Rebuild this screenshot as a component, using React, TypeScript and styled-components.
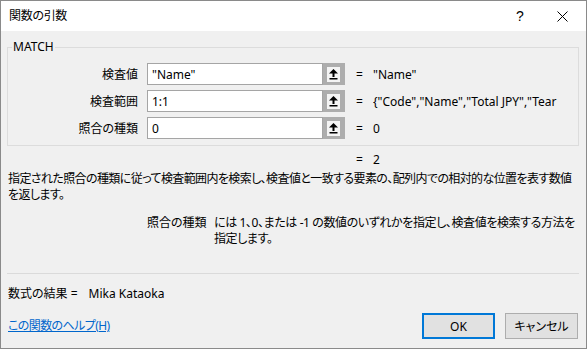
import React from "react";
import styled, { createGlobalStyle } from "styled-components";

const GlobalStyle = createGlobalStyle`
  html, body { margin: 0; padding: 0; background: #ffffff; }
  body {
    font-family: "Noto Sans", "Noto Sans CJK JP", sans-serif;
    font-size: 12px;
    color: #000;
    font-feature-settings: "palt";
  }
  * { box-sizing: border-box; }
`;

const Window = styled.div`
  width: 587px;
  height: 349px;
  border: 1px solid #8a8a8a;
  display: flex;
  flex-direction: column;
  background: #f0f0f0;
  overflow: hidden;
`;

const TitleBar = styled.div`
  height: 30px;
  flex: none;
  background: #ffffff;
  display: flex;
  align-items: center;
  padding-left: 8px;
`;

const Title = styled.div`
  line-height: 16px;
  margin-top: -1px;
  letter-spacing: -0.3px;
`;

const TitleButtons = styled.div`
  margin-left: auto;
  display: flex;
  height: 100%;
`;

const TitleButton = styled.div<{ $w: number }>`
  width: ${(p) => p.$w}px;
  height: 100%;
  display: flex;
  align-items: center;
  justify-content: center;
  font-size: 14px;
  font-family: "Liberation Sans", sans-serif;
`;

const Body = styled.div`
  flex: 1;
  display: flex;
  flex-direction: column;
  padding: 0 7px 0 6px;
`;

const GroupBox = styled.fieldset`
  margin: 8px 0 0;
  padding: 8px 0 6px 0;
  border: 1px solid #dcdcdc;
  min-width: 0;
`;

const GroupLegend = styled.legend`
  margin-left: 4px;
  padding: 0 1px;
  line-height: 16px;
`;

const Rows = styled.div`
  display: flex;
  flex-direction: column;
  gap: 5px;
`;

const ArgRow = styled.div`
  display: flex;
  align-items: center;
  height: 22px;
`;

const ArgLabel = styled.div`
  width: 130px;
  flex: none;
  text-align: right;
  margin-right: 9px;
`;

const Field = styled.input`
  width: 176px;
  height: 22px;
  flex: none;
  border: 1px solid #a5a5a5;
  background: #fff;
  padding: 0 4px;
  font: inherit;
  font-feature-settings: "palt";
  color: #000;
  outline: none;
`;

const RefButton = styled.div`
  width: 22px;
  height: 22px;
  flex: none;
  background: #adadad;
  display: flex;
  align-items: center;
  padding-left: 4px;
`;

const RefFace = styled.div`
  width: 13px;
  height: 15px;
  background: #f4f4f4;
  display: flex;
  align-items: center;
  justify-content: center;
`;

const Eq = styled.div`
  width: 17px;
  flex: none;
  margin-left: 11px;
`;

const Value = styled.div`
  flex: 1;
  min-width: 0;
  white-space: nowrap;
  overflow: hidden;
`;

const ResultEq = styled.div`
  display: flex;
  margin-top: 6px;
  padding-left: 349px;
  line-height: 16px;
`;

const ResultEqSign = styled.span`
  width: 17px;
  flex: none;
`;

const Description = styled.div`
  margin-top: 3px;
  padding-left: 1px;
  line-height: 16px;
  white-space: nowrap;
  letter-spacing: -0.6px;
`;

const ArgHelp = styled.div`
  display: flex;
  margin-top: 12px;
  padding-left: 140px;
  line-height: 16px;
`;

const ArgHelpLabel = styled.div`
  width: 67px;
  flex: none;
`;

const ArgHelpText = styled.div`
  white-space: nowrap;
  letter-spacing: -0.4px;
`;

const Separator = styled.div`
  margin-top: 26px;
  border-top: 1px solid #dadada;
`;

const FormulaResult = styled.div`
  display: flex;
  margin-top: 12px;
  padding-left: 1px;
  line-height: 16px;
`;

const FormulaValue = styled.span`
  margin-left: 11px;
`;

const Footer = styled.div`
  display: flex;
  align-items: center;
  margin-top: 11px;
  gap: 10px;
  padding-right: 1px;
`;

const HelpLink = styled.a`
  flex: 1;
  color: #0066cc;
  text-decoration: underline;
  padding-left: 1px;
  line-height: 16px;
  letter-spacing: -0.6px;
  cursor: pointer;
`;

const DialogButton = styled.button<{ $primary?: boolean }>`
  width: 73px;
  height: 26px;
  background: #e1e1e1;
  border: ${(p) => (p.$primary ? "2px solid #0078d7" : "1px solid #adadad")};
  font: inherit;
  font-feature-settings: "palt";
  color: #000;
  padding: 0;
`;

const UpArrow = () => (
  <svg width="9" height="11" viewBox="0 0 9 11">
    <polygon points="4.5,0 9,4.5 0,4.5" fill="#000" />
    <rect x="3.5" y="4" width="2" height="4" fill="#000" />
    <rect x="0.5" y="9" width="8" height="1.5" fill="#000" />
  </svg>
);

const CloseIcon = () => (
  <svg width="11" height="11" viewBox="0 0 11 11">
    <path d="M0.5 0.5 L10.5 10.5 M10.5 0.5 L0.5 10.5" stroke="#000" strokeWidth="1" />
  </svg>
);

const args = [
  { label: "検査値", input: '"Name"', value: '"Name"' },
  { label: "検査範囲", input: "1:1", value: '{"Code","Name","Total JPY","Tear' },
  { label: "照合の種類", input: "0", value: "0" },
];

export default function App() {
  return (
    <>
      <GlobalStyle />
      <Window>
        <TitleBar>
          <Title>関数の引数</Title>
          <TitleButtons>
            <TitleButton $w={36}>?</TitleButton>
            <TitleButton $w={48}>
              <CloseIcon />
            </TitleButton>
          </TitleButtons>
        </TitleBar>
        <Body>
          <GroupBox>
            <GroupLegend>MATCH</GroupLegend>
            <Rows>
              {args.map((a) => (
                <ArgRow key={a.label}>
                  <ArgLabel>{a.label}</ArgLabel>
                  <Field readOnly value={a.input} />
                  <RefButton>
                    <RefFace>
                      <UpArrow />
                    </RefFace>
                  </RefButton>
                  <Eq>=</Eq>
                  <Value>{a.value}</Value>
                </ArgRow>
              ))}
            </Rows>
          </GroupBox>
          <ResultEq>
            <ResultEqSign>=</ResultEqSign>
            <span>2</span>
          </ResultEq>
          <Description>
            指定された照合の種類に従って検査範囲内を検索し、検査値と一致する要素の、配列内での相対的な位置を表す数値
            <br />
            を返します。
          </Description>
          <ArgHelp>
            <ArgHelpLabel>照合の種類</ArgHelpLabel>
            <ArgHelpText>
              には 1、0、または -1 の数値のいずれかを指定し、検査値を検索する方法を
              <br />
              指定します。
            </ArgHelpText>
          </ArgHelp>
          <Separator />
          <FormulaResult>
            数式の結果 =<FormulaValue>Mika Kataoka</FormulaValue>
          </FormulaResult>
          <Footer>
            <HelpLink>この関数のヘルプ(H)</HelpLink>
            <DialogButton $primary>OK</DialogButton>
            <DialogButton>キャンセル</DialogButton>
          </Footer>
        </Body>
      </Window>
    </>
  );
}
